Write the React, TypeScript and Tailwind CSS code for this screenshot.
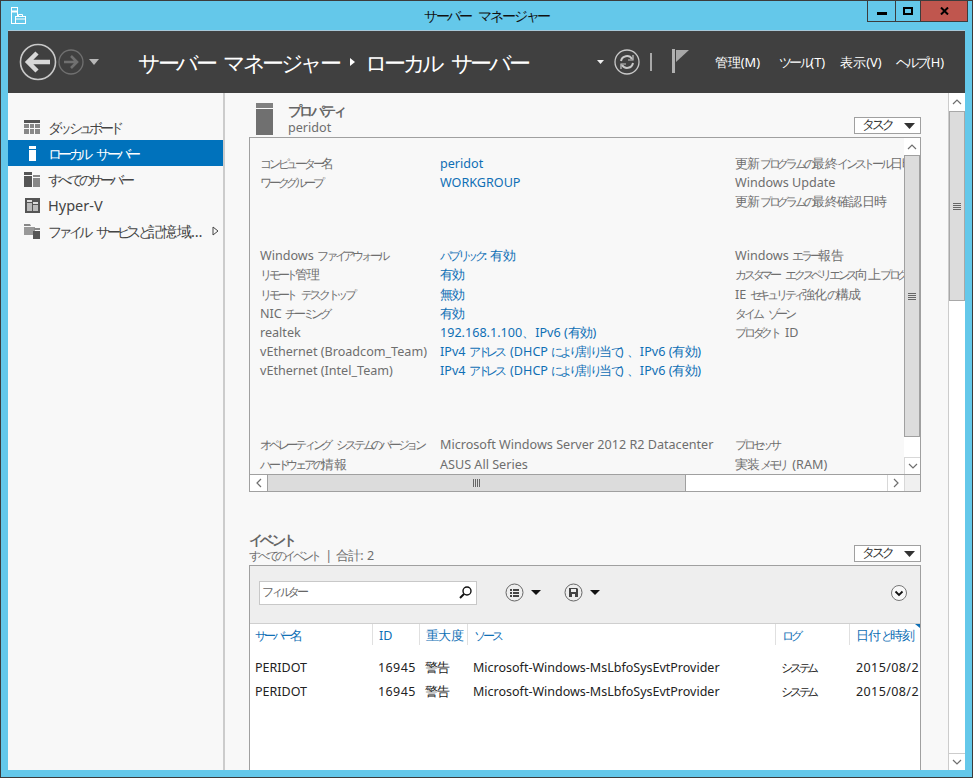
import React from "react";

/* Kana runs are tightened with letter-spacing: the reference face has condensed kana. */
function jp(text: string, cls = "text-[12px] tracking-[-0.27em]") {
  return text.split(/([\u3040-\u30ff]+|[\u4e00-\u9fff]+)/).map((part, i) =>
    /[\u3040-\u30ff]/.test(part) ? (
      <span key={i} className={cls}>{part}</span>
    ) : /[\u4e00-\u9fff]/.test(part) ? (
      <span key={i} className="tracking-[-0.05em]">{part}</span>
    ) : (
      <span key={i} className={i > 0 && part.startsWith(" ") ? "ml-[3px]" : ""}>{part}</span>
    )
  );
}

function Chevron({ dir }: { dir: "up" | "down" | "left" | "right" }) {
  const d = {
    up: "M1 6 L5 2 L9 6",
    down: "M1 2 L5 6 L9 2",
    left: "M6 1 L2 5 L6 9",
    right: "M2 1 L6 5 L2 9",
  }[dir];
  const vertical = dir === "up" || dir === "down";
  return (
    <svg width={vertical ? 10 : 8} height={vertical ? 8 : 10} viewBox={vertical ? "0 0 10 8" : "0 0 8 10"}>
      <path d={d} fill="none" stroke="#6f6f6f" strokeWidth="1.2" />
    </svg>
  );
}

function Grip({ vertical }: { vertical?: boolean }) {
  return vertical ? (
    <div className="flex flex-col gap-px w-[8px]">
      <div className="h-px bg-[#666]" />
      <div className="h-px bg-[#666]" />
      <div className="h-px bg-[#666]" />
      <div className="h-px bg-[#666]" />
    </div>
  ) : (
    <div className="flex gap-px h-[8px]">
      <div className="w-px bg-[#666]" />
      <div className="w-px bg-[#666]" />
      <div className="w-px bg-[#666]" />
      <div className="w-px bg-[#666]" />
    </div>
  );
}

function TaskButton() {
  return (
    <div className="w-[67px] h-[17px] bg-white border border-[#a0a0a0] flex items-center justify-between pl-[7px] pr-[5px] text-[12.6px] leading-none text-[#333]">
      <span>{jp("タスク", "text-[12.5px] tracking-[-0.25em]")}</span>
      <svg width="11" height="6" viewBox="0 0 11 6"><path d="M0 0H11L5.5 6Z" fill="#333" /></svg>
    </div>
  );
}

function PropRow({ a, b, c, mtClass, gray }: { a?: string; b?: string; c?: string; mtClass?: string; gray?: boolean }) {
  return (
    <div className={`flex ${gray ? "h-[20px]" : "h-[19.2px]"} items-center text-[12.6px] leading-[19px] whitespace-nowrap ${mtClass ?? ""}`}>
      <div className="w-[180px] text-[#6e6e6e] shrink-0">{a && jp(a)}</div>
      <div className={`w-[295px] shrink-0 ${gray ? "text-[#6e6e6e]" : "text-[#0f6fb5]"}`}>{b && jp(b)}</div>
      <div className="text-[#6e6e6e] shrink-0">{c && jp(c)}</div>
    </div>
  );
}

function NavItem({ icon, label, selected, arrow }: { icon: React.ReactNode; label: string; selected?: boolean; arrow?: boolean }) {
  return (
    <div className={`h-[26px] flex items-center pl-[16px] pr-[4px] text-[14.5px] leading-none whitespace-nowrap ${selected ? "bg-[#0072bc] text-white" : "text-[#444]"}`}>
      <div className="w-[16px] h-[16px] mr-[8px] shrink-0 flex items-center justify-center">{icon}</div>
      <span className="flex-1">{jp(label, "text-[14px] tracking-[-0.26em]")}</span>
      {arrow && (
        <svg width="7" height="10" viewBox="0 0 7 10"><path d="M1 1 L6 5 L1 9Z" fill="none" stroke="#444" strokeWidth="1" /></svg>
      )}
    </div>
  );
}

const cols = [
  { label: "サーバー名", w: "w-[122px]" },
  { label: "ID", w: "w-[47px]" },
  { label: "重大度", w: "w-[48px]" },
  { label: "ソース", w: "w-[308px]" },
  { label: "ログ", w: "w-[74px]" },
  { label: "日付と時刻", w: "w-[71px]" },
];

function EventRow() {
  return (
    <div className="flex h-[24px] items-center text-[12.5px] leading-none text-[#222] whitespace-nowrap">
      <div className="w-[122px] pl-[5px] shrink-0">PERIDOT</div>
      <div className="w-[47px] pl-[6px] shrink-0 tracking-[0.4px]">16945</div>
      <div className="w-[48px] pl-[6px] shrink-0">{jp("警告")}</div>
      <div className="w-[308px] pl-[6px] shrink-0">Microsoft-Windows-MsLbfoSysEvtProvider</div>
      <div className="w-[74px] pl-[6px] shrink-0">{jp("システム")}</div>
      <div className="w-[70px] pl-[7px] shrink-0 overflow-hidden tracking-[0.4px]">2015/08/25</div>
    </div>
  );
}

export default function App() {
  return (
    <div className="w-[973px] h-[778px] flex flex-col bg-[#64c8ea] border border-[#3c3c3c] overflow-hidden font-['Noto_Sans','Noto_Sans_CJK_JP',sans-serif]">
      {/* Title bar */}
      <div className="h-[29px] shrink-0 flex items-start relative">
        <div className="pl-[9px] pt-[6px] w-[60px]">
          <svg width="18" height="18" viewBox="0 0 18 18" fill="none" stroke="#fff" strokeWidth="1">
            <rect x="1.5" y="0.5" width="6" height="16" fill="#64c8ea" />
            <rect x="1.5" y="4" width="6" height="1" fill="#fff" />
            <rect x="5.5" y="9.5" width="10" height="7" fill="#64c8ea" />
            <path d="M8.5 9.5V7.5H12.5V9.5M5.5 12H15.5" />
          </svg>
        </div>
        <div className="flex-1 text-center text-[14px] leading-[30px] text-[#111]">{jp("サーバー マネージャー", "tracking-[-0.15em]")}</div>
        <div className="w-[60px]" />
        <div className="absolute right-[4px] top-0 h-[21px] flex border border-t-0 border-[#3c3c3c]">
          <div className="w-[28px] flex items-center justify-center border-r border-[#3c3c3c]">
            <div className="w-[10px] h-[3px] bg-black mt-[5px]" />
          </div>
          <div className="w-[25px] flex items-center justify-center border-r border-[#3c3c3c]">
            <div className="w-[10px] h-[8px] border-2 border-black" />
          </div>
          <div className="w-[46px] bg-[#c0564e] flex items-center justify-center">
            <svg width="9" height="8" viewBox="0 0 9 8"><path d="M1 0.5 L8 7.5 M8 0.5 L1 7.5" stroke="#000" strokeWidth="2" /></svg>
          </div>
        </div>
      </div>

      {/* Client */}
      <div className="flex-1 min-h-0 mx-[7px] mb-[7px] flex flex-col bg-white border-t border-[#a8c8d8]">
        {/* Header */}
        <div className="h-[62px] shrink-0 bg-[#404040] flex items-center text-white">
          <div className="flex items-center pl-[11px] w-[130px]">
            <svg width="38" height="38" viewBox="0 0 38 38" fill="none">
              <circle cx="19" cy="19" r="17.5" stroke="#c8c8c8" strokeWidth="1.6" />
              <path d="M9 19H31M18 10L9 19L18 28" stroke="#d8d8d8" strokeWidth="4.5" />
            </svg>
            <svg width="26" height="26" viewBox="0 0 26 26" className="ml-[1px]" fill="none">
              <circle cx="13" cy="13" r="12" stroke="#707070" strokeWidth="1.3" />
              <path d="M19 13H6M13 7L19 13L13 19" stroke="#707070" strokeWidth="2.6" />
            </svg>
            <svg width="10" height="6" viewBox="0 0 10 6" className="ml-[5px]"><path d="M0 0H10L5 6Z" fill="#b8b8b8" /></svg>
          </div>
          <div className="text-[22px] leading-none whitespace-nowrap flex items-center">
            <span>{jp("サーバー マネージャー", "tracking-[-0.155em]")}</span>
            <svg width="5" height="8" viewBox="0 0 5 8" className="ml-[11px] mr-[10px]"><path d="M0 0L5 4L0 8Z" fill="#fff" /></svg>
            <span>{jp("ローカル サーバー", "tracking-[-0.155em]")}</span>
          </div>
          <div className="ml-auto flex items-center">
            <svg width="7" height="4" viewBox="0 0 7 4"><path d="M0 0H7L3.5 4Z" fill="#eee" /></svg>
            <svg width="26" height="26" viewBox="0 0 26 26" className="ml-[10px]" fill="none" stroke="#c8c8c8">
              <circle cx="13" cy="13" r="12" strokeWidth="1.3" />
              <path d="M7 12 A6 6 0 0 1 18 10 M19 14 A6 6 0 0 1 8 16" strokeWidth="2" />
              <path d="M19 6V11H14M7 20V15H12" strokeWidth="1.2" />
            </svg>
            <div className="w-[2px] h-[18px] bg-[#a8a8a8] ml-[10px]" />
            <svg width="18" height="24" viewBox="0 0 18 24" className="ml-[20px] mb-[2px]">
              <rect x="0" y="0" width="3" height="24" fill="#b0b0b0" />
              <path d="M4 1 H17 L4 13Z" fill="#a8a8a8" />
            </svg>
            <div className="flex text-[12.8px] leading-none text-white ml-[25px] pr-[21px] whitespace-nowrap">
              <span>管理(M)</span>
              <span className="ml-[19px]">{jp("ツール", "tracking-[-0.2em]")}(T)</span>
              <span className="ml-[15px]">表示(V)</span>
              <span className="ml-[14px]">{jp("ヘルプ", "tracking-[-0.2em]")}(H)</span>
            </div>
          </div>
        </div>

        {/* Body */}
        <div className="flex-1 min-h-0 flex bg-[#f8f8f8]">
          {/* Nav */}
          <div className="w-[217px] shrink-0 border-r-2 border-[#cccccc] pt-[21px]">
            <NavItem
              label="ダッシュボード"
              icon={
                <svg width="16" height="14" viewBox="0 0 16 14">
                  <rect width="16" height="3" fill="#555" />
                  <path d="M0 4h5v4H0zM6 4h4v4H6zM11 4h5v4h-5zM0 9h5v5H0zM6 9h4v5H6zM11 9h5v5h-5z" fill="#888" />
                </svg>
              }
            />
            <NavItem
              selected
              label="ローカル サーバー"
              icon={
                <svg width="7" height="15" viewBox="0 0 7 15">
                  <rect width="7" height="3" fill="#fff" />
                  <rect y="4" width="7" height="11" fill="#fff" />
                </svg>
              }
            />
            <NavItem
              label="すべてのサーバー"
              icon={
                <svg width="16" height="15" viewBox="0 0 16 15">
                  <rect width="8" height="3" fill="#555" />
                  <rect y="4" width="8" height="11" fill="#555" />
                  <rect x="9" y="3" width="7" height="2" fill="#888" />
                  <rect x="9" y="6" width="7" height="9" fill="#888" />
                </svg>
              }
            />
            <NavItem
              label="Hyper-V"
              icon={
                <svg width="15" height="15" viewBox="0 0 15 15">
                  <rect width="15" height="15" fill="#555" />
                  <rect x="2" y="2" width="5" height="2" fill="#ddd" />
                  <rect x="2" y="5" width="5" height="8" fill="#bbb" />
                  <rect x="8" y="4" width="5" height="2" fill="#ddd" />
                  <rect x="8" y="7" width="5" height="6" fill="#bbb" />
                </svg>
              }
            />
            <NavItem
              arrow
              label="ファイル サービスと記憶域…"
              icon={
                <svg width="16" height="15" viewBox="0 0 16 15">
                  <path d="M0 0H6L7 2H0Z" fill="#888" />
                  <rect y="3" width="11" height="8" fill="#999" />
                  <rect x="10" y="4" width="6" height="2" fill="#888" />
                  <rect x="9" y="7" width="7" height="8" fill="#555" />
                </svg>
              }
            />
          </div>

          {/* Main */}
          <div className="flex-1 min-w-0 pl-[24px] pr-[27px] overflow-hidden">
            {/* Properties header */}
            <div className="h-[44px] flex items-end">
              <div className="w-[17px] h-[32px] mr-[15px] mb-[2px] ml-[7px] flex flex-col gap-px">
                <div className="h-[5px] bg-[#808080]" />
                <div className="flex-1 bg-[#707070]" />
              </div>
              <div className="flex-1 mb-[2px]">
                <div className="text-[13.5px] leading-[17px] font-bold text-[#666]">{jp("プロパティ", "tracking-[-0.2em]")}</div>
                <div className="text-[12.6px] leading-[15px] text-[#6e6e6e]">peridot</div>
              </div>
              <div className="mb-[3px]"><TaskButton /></div>
            </div>

            {/* Properties panel */}
            <div className="h-[355px] border border-[#a0a0a0] flex flex-col bg-[#f8f8f8]">
              <div className="flex-1 min-h-0 flex">
                <div className="w-[654px] overflow-hidden pl-[10px] pt-[16px]">
                  <PropRow a="コンピューター名" b="peridot" c="更新プログラムの最終インストール日時" />
                  <PropRow a="ワークグループ" b="WORKGROUP" c="Windows Update" />
                  <PropRow c="更新プログラムの最終確認日時" />
                  <PropRow mtClass="mt-[34.5px]" a="Windows ファイアウォール" b="パブリック: 有効" c="Windows エラー報告" />
                  <PropRow a="リモート管理" b="有効" c="カスタマー エクスペリエンス向上プログラム" />
                  <PropRow a="リモート デスクトップ" b="無効" c="IE セキュリティ強化の構成" />
                  <PropRow a="NIC チーミング" b="有効" c="タイム ゾーン" />
                  <PropRow a="realtek" b="192.168.1.100、IPv6 (有効)" c="プロダクト ID" />
                  <PropRow a="vEthernet (Broadcom_Team)" b="IPv4 アドレス (DHCP により割り当て) 、IPv6 (有効)" />
                  <PropRow a="vEthernet (Intel_Team)" b="IPv4 アドレス (DHCP により割り当て) 、IPv6 (有効)" />
                  <PropRow gray mtClass="mt-[54.5px]" a="オペレーティング システムのバージョン" b="Microsoft Windows Server 2012 R2 Datacenter" c="プロセッサ" />
                  <PropRow gray a="ハードウェアの情報" b="ASUS All Series" c="実装メモリ (RAM)" />
                </div>
                {/* vertical scrollbar */}
                <div className="w-[16px] shrink-0 flex flex-col bg-white">
                  <div className="h-[17px] flex items-center justify-center"><Chevron dir="up" /></div>
                  <div className="h-[282px] bg-[#dcdcdc] border border-[#a0a0a0] flex items-center justify-center"><Grip vertical /></div>
                  <div className="flex-1" />
                  <div className="h-[17px] flex items-center justify-center border-t border-l border-[#d8d8d8]"><Chevron dir="down" /></div>
                </div>
              </div>
              {/* horizontal scrollbar */}
              <div className="h-[17px] shrink-0 flex bg-white border-t border-[#a0a0a0]">
                <div className="w-[17px] flex items-center justify-center"><Chevron dir="left" /></div>
                <div className="w-[419px] bg-[#dcdcdc] border-x border-[#a0a0a0] flex items-center justify-center"><Grip /></div>
                <div className="flex-1" />
                <div className="w-[17px] flex items-center justify-center border-l border-[#d8d8d8]"><Chevron dir="right" /></div>
                <div className="w-[16px] bg-[#f0f0f0] border-l border-[#d8d8d8]" />
              </div>
            </div>

            {/* Events header */}
            <div className="mt-[37px] h-[36px] flex items-end">
              <div className="flex-1 mb-[2px]">
                <div className="text-[13.5px] leading-[16px] font-bold text-[#666]">{jp("イベント", "tracking-[-0.2em]")}</div>
                <div className="text-[12.6px] leading-[15px] text-[#6e6e6e]">{jp("すべてのイベント | 合計: 2")}</div>
              </div>
              <div className="mb-[3px]"><TaskButton /></div>
            </div>

            {/* Events panel */}
            <div className="h-[210px] border border-b-0 border-[#a0a0a0] bg-white">
              <div className="h-[58px] bg-[#eeeeee] border-b border-[#cfcfcf] flex items-center pl-[9px] pr-[13px] pb-[4px]">
                <div className="w-[218px] h-[24px] bg-white border border-[#c8c8c8] flex items-center justify-between pl-[2px] pr-[4px] text-[12.6px] leading-none text-[#666]">
                  <span>{jp("フィルター")}</span>
                  <svg width="13" height="13" viewBox="0 0 13 13" fill="none" stroke="#111">
                    <circle cx="8" cy="5" r="4" strokeWidth="1.4" />
                    <path d="M5 8L1 12" strokeWidth="2" />
                  </svg>
                </div>
                <svg width="19" height="19" viewBox="0 0 19 19" className="ml-[28px]" fill="none">
                  <circle cx="9.5" cy="9.5" r="8.5" stroke="#666" />
                  <path d="M5 6h2v2H5zM8 6h6v2H8zM5 9h2v2H5zM8 9h6v2H8zM5 12h2v2H5zM8 12h6v2H8z" fill="#444" />
                </svg>
                <svg width="10" height="5" viewBox="0 0 10 5" className="ml-[7px]"><path d="M0 0H10L5 5Z" fill="#111" /></svg>
                <svg width="19" height="19" viewBox="0 0 19 19" className="ml-[23px]" fill="none">
                  <circle cx="9.5" cy="9.5" r="8.5" stroke="#666" />
                  <path d="M5 5H13L14 6V14H5ZM7 6V9H12V6ZM8 11V14H11V11Z" fill="#444" fillRule="evenodd" />
                </svg>
                <svg width="10" height="5" viewBox="0 0 10 5" className="ml-[7px]"><path d="M0 0H10L5 5Z" fill="#111" /></svg>
                <svg width="16" height="16" viewBox="0 0 16 16" className="ml-auto" fill="none">
                  <circle cx="8" cy="8" r="7.5" stroke="#777" fill="#f8f8f8" />
                  <path d="M4.5 6.5L8 10L11.5 6.5" stroke="#111" strokeWidth="1.8" />
                </svg>
              </div>
              <div className="flex h-[24px] relative whitespace-nowrap">
                {cols.map((c, i) => (
                  <div key={c.label} className={`${c.w} shrink-0 h-[21px] text-[12.6px] leading-[23px] text-[#0f6fb5] ${i > 0 ? "pl-[6px] border-l border-[#e0e0e0]" : "pl-[5px]"}`}>
                    {jp(c.label)}
                  </div>
                ))}
                <svg width="5" height="4" viewBox="0 0 5 4" className="absolute right-0 top-0"><path d="M0 0H5V4Z" fill="#0f6fb5" /></svg>
              </div>
              <div className="pt-[8px]">
                <EventRow />
                <EventRow />
              </div>
            </div>
          </div>

          {/* Outer scrollbar */}
          <div className="w-[17px] shrink-0 flex flex-col bg-white border-l border-[#cccccc]">
            <div className="h-[18px] flex items-center justify-center"><Chevron dir="up" /></div>
            <div className="h-[190px] bg-[#dcdcdc] border border-[#a8a8a8] flex items-center justify-center"><Grip vertical /></div>
            <div className="flex-1" />
            <div className="h-[17px] flex items-center justify-center border-t border-[#cccccc]"><Chevron dir="down" /></div>
          </div>
        </div>
      </div>
    </div>
  );
}
